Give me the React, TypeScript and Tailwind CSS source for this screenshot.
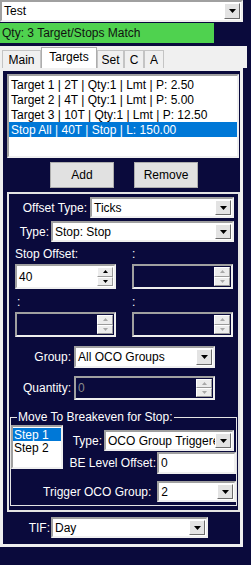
import React from "react";

const navy = "bg-[#0a0a3c]";

const Tri = ({ up = false, dim = false, small = false }: { up?: boolean; dim?: boolean; small?: boolean }) => {
  const w = small ? 5 : 7;
  const h = small ? 3 : 4;
  return (
    <svg width={w} height={h} viewBox={`0 0 ${w} ${h}`}>
      <path d={up ? `M0 ${h}H${w}L${w / 2} 0Z` : `M0 0H${w}L${w / 2} ${h}Z`} fill={dim ? "#a8a8a8" : "#000"} />
    </svg>
  );
};

const DropBtn = () => (
  <div className="w-[16px] my-[1px] mr-[1px] flex items-center justify-center bg-[#e3e3e3] border border-t-white border-l-white border-r-[#6d6d6d] border-b-[#6d6d6d]">
    <Tri />
  </div>
);

const Combo = ({ value, className = "" }: { value: string; className?: string }) => (
  <div
    className={`flex items-stretch bg-white border-2 border-t-[#a0a0a0] border-l-[#a0a0a0] border-r-[#efefef] border-b-[#efefef] ${className}`}
  >
    <div className="flex-1 flex items-center pl-[2px] text-black overflow-hidden whitespace-nowrap">{value}</div>
    <DropBtn />
  </div>
);

const SpinBtn = ({ up = false, dim = false }: { up?: boolean; dim?: boolean }) => (
  <div className="flex-1 flex items-center justify-center bg-[#ececec] border border-t-white border-l-white border-r-[#9a9a9a] border-b-[#9a9a9a]">
    <Tri up={up} dim={dim} small />
  </div>
);

const Num = ({ value = "", disabled = false, className = "" }: { value?: string; disabled?: boolean; className?: string }) => (
  <div
    className={`flex items-stretch border-2 border-t-[#a0a0a0] border-l-[#a0a0a0] border-r-[#efefef] border-b-[#efefef] ${
      disabled ? "bg-[#0a0a3c] text-[#8a8a8a]" : "bg-white text-black"
    } ${className}`}
  >
    <div className="flex-1 flex items-center pl-[2px]">{value}</div>
    <div className="w-[16px] flex flex-col my-[1px] mr-[1px]">
      <SpinBtn up dim={disabled} />
      <SpinBtn dim={disabled} />
    </div>
  </div>
);

const Tab = ({ label, w, selected = false }: { label: string; w: string; selected?: boolean }) => (
  <div
    className={`flex items-center justify-center border border-b-0 ${w} ${
      selected ? "h-[21px] bg-white border-[#adadad] pb-[2px]" : "h-[18px] bg-[#f0f0f0] border-[#c4c4c4]"
    }`}
  >
    {label}
  </div>
);

const Label = ({ children, className = "" }: { children: React.ReactNode; className?: string }) => (
  <div className={`text-white text-right whitespace-nowrap ${className}`}>{children}</div>
);

export default function App() {
  const rows = [
    "Target 1 | 2T | Qty:1 | Lmt | P: 2.50",
    "Target 2 | 4T | Qty:1 | Lmt | P: 5.00",
    "Target 3 | 10T | Qty:1 | Lmt | P: 12.50",
    "Stop All | 40T | Stop | L: 150.00",
  ];

  return (
    <div className={`w-[251px] h-[565px] overflow-hidden ${navy} text-[12px] leading-[14px] font-['Liberation_Sans',Arial,sans-serif]`}>
      <Combo value="Test" className="w-[243px] h-[22px]" />
      <div className="mt-[1px] w-[214px] h-[20px] bg-[#4fd24f] flex items-center pl-[2px] text-[#111]">
        Qty: 3 Target/Stops Match
      </div>

      {/* tab control */}
      <div className="mt-[3px] w-[247px]">
        <div className="h-[22px] bg-[#f0f0f0] flex items-end pl-[2px] text-black">
          <Tab label="Main" w="w-[39px]" />
          <Tab label="Targets" w="w-[56px]" selected />
          <Tab label="Set" w="w-[27px]" />
          <Tab label="C" w="w-[20px]" />
          <Tab label="A" w="w-[20px]" />
        </div>
        <div className="w-[243px] h-[479px] bg-[#f0f0f0] p-[3px]">
          <div className={`h-full ${navy} flex flex-col`}>
            {/* list */}
            <div className="ml-[4px] mt-[3px] w-[232px] h-[84px] bg-white border-2 border-t-[#a0a0a0] border-l-[#a0a0a0] border-r-[#efefef] border-b-[#efefef] pt-[1px] text-black">
              {rows.map((r, i) => (
                <div
                  key={r}
                  className={`h-[15px] pl-[2px] flex items-center whitespace-nowrap ${i === 3 ? "bg-[#0078d7] text-white" : ""}`}
                >
                  {r}
                </div>
              ))}
            </div>

            <div className="mt-[4px] pl-[47px] flex gap-[20px] text-black">
              <div className="w-[64px] h-[26px] bg-[#e1e1e1] border border-[#adadad] flex items-center justify-center">Add</div>
              <div className="w-[64px] h-[26px] bg-[#e1e1e1] border border-[#adadad] flex items-center justify-center">Remove</div>
            </div>

            {/* settings panel */}
            <div className="mt-[4px] ml-[4px] w-[233px] h-[320px] border-2 border-[#e4e4e4] flex flex-col">
              <div className="mt-[3px] flex items-center">
                <Label className="w-[81px] pr-[3px]">Offset Type:</Label>
                <Combo value="Ticks" className="w-[144px] h-[21px]" />
              </div>
              <div className="mt-[3px] flex items-center">
                <Label className="w-[42px] pr-[2px]">Type:</Label>
                <Combo value="Stop: Stop" className="w-[183px] h-[21px]" />
              </div>
              <div className="mt-[5px] flex text-white h-[14px]">
                <div className="ml-[6px] w-[117px]">Stop Offset:</div>
                <div>:</div>
              </div>
              <div className="mt-[3px] flex ml-[6px] gap-[16px]">
                <Num value="40" className="w-[101px] h-[25px]" />
                <Num disabled className="w-[101px] h-[25px]" />
              </div>
              <div className="mt-[6px] flex text-white h-[14px]">
                <div className="ml-[8px] w-[115px]">:</div>
                <div>:</div>
              </div>
              <div className="mt-[3px] flex ml-[6px] gap-[16px]">
                <Num disabled className="w-[101px] h-[25px]" />
                <Num disabled className="w-[101px] h-[25px]" />
              </div>
              <div className="mt-[9px] flex items-center">
                <Label className="w-[65px] pr-[3px]">Group:</Label>
                <Combo value="All OCO Groups" className="w-[141px] h-[22px]" />
              </div>
              <div className="mt-[8px] flex items-center">
                <Label className="w-[65px] pr-[3px]">Quantity:</Label>
                <Num value="0" disabled className="w-[141px] h-[24px]" />
              </div>

              {/* breakeven group */}
              <div className="mt-[17px] ml-[1px] w-[227px] h-[89px] border border-[#e4e4e4] flex flex-col">
                <div className={`-mt-[8px] ml-[6px] px-[1px] w-fit ${navy} text-white`}>Move To Breakeven for Stop:</div>
                <div className="mt-[1px] flex">
                  <div className="w-[53px] h-[44px] bg-white border-2 border-t-[#a0a0a0] border-l-[#a0a0a0] border-r-[#efefef] border-b-[#efefef] pt-[1px] text-black">
                    <div className="h-[13px] bg-[#0078d7] text-white pl-[1px] flex items-center">Step 1</div>
                    <div className="h-[13px] pl-[1px] flex items-center">Step 2</div>
                  </div>
                  <div className="flex flex-col">
                    <div className="mt-[5px] flex items-center">
                      <Label className="w-[41px] pr-[2px]">Type:</Label>
                      <Combo value="OCO Group Triggered" className="w-[130px] h-[21px]" />
                    </div>
                    <div className="mt-[1px] flex items-center">
                      <Label className="w-[94px] pr-[1px]">BE Level Offset:</Label>
                      <div className="w-[79px] h-[22px] bg-white border-2 border-t-[#a0a0a0] border-l-[#a0a0a0] border-r-[#efefef] border-b-[#efefef] flex items-center pl-[2px] text-black">
                        0
                      </div>
                    </div>
                  </div>
                </div>
                <div className="mt-[7px] flex items-center">
                  <Label className="w-[147px] pr-[6px]">Trigger OCO Group:</Label>
                  <Combo value="2" className="w-[79px] h-[21px]" />
                </div>
              </div>
            </div>

            <div className="mt-[5px] flex items-center">
              <Label className="w-[48px] pr-[1px]">TIF:</Label>
              <Combo value="Day" className="w-[157px] h-[21px]" />
            </div>
          </div>
        </div>
      </div>
    </div>
  );
}
